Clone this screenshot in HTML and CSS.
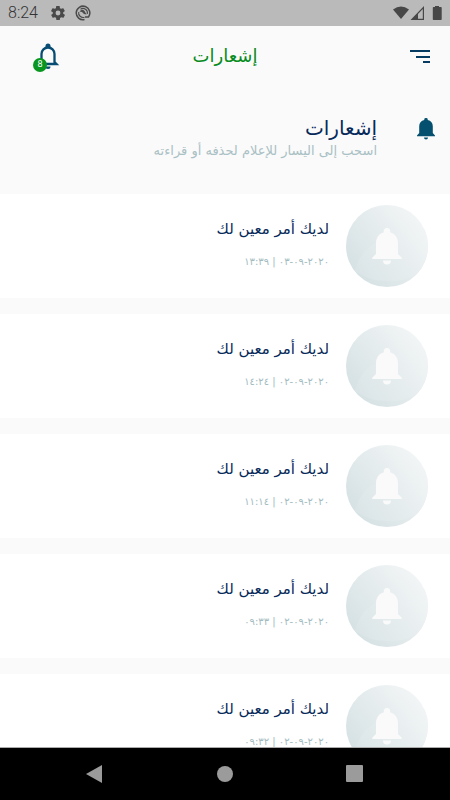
FILE: index.html
```html
<!DOCTYPE html>
<html lang="ar" dir="rtl">
<head>
<meta charset="utf-8">
<meta name="viewport" content="width=device-width, initial-scale=1">
<title>إشعارات</title>
<link rel="stylesheet" href="styles.css">
</head>
<body>
<svg width="0" height="0" class="defs" aria-hidden="true">
  <defs>
    <linearGradient id="disc" x1="0.1" y1="0.85" x2="0.9" y2="0.2">
      <stop offset="0" stop-color="#d5e1e3"/>
      <stop offset="1" stop-color="#f2f5f6"/>
    </linearGradient>
    <linearGradient id="shine" x1="0" y1="0.7" x2="1" y2="0.2">
      <stop offset="0" stop-color="#dbe5e7"/>
      <stop offset="1" stop-color="#f0f4f5"/>
    </linearGradient>
    <clipPath id="round"><circle cx="41" cy="41" r="41"/></clipPath>
    <symbol id="avatar" viewBox="0 0 82 82">
      <circle cx="41" cy="41" r="41" fill="url(#disc)"/>
      <path clip-path="url(#round)" fill="url(#shine)" d="M9 66Q14 44 34 36Q58 24 82 24V62Q60 78 42 76Q22 76 9 66z"/>
      <path fill="#fafafa" d="M41 23a3.200 3.200 0 0 1 3.100 4.200C49 28.600 52 32.600 52 38v11l3.800 3.800q.5 1.200-.8 1.200H27q-1.300 0-.8-1.200L30 49V38c0-5.400 3-9.400 7.900-10.800A3.200 3.200 0 0 1 41 23zM37 55.500h8a4 4 0 0 1-8 0z"/>
    </symbol>
  </defs>
</svg>
<div class="status" dir="ltr">
  <span class="clock">8:24</span>
  <svg class="gear" width="14" height="14" viewBox="2 2 20 20"><path fill="#4a4a4a" d="M19.400 13a7.500 7.500 0 0 0 0-2l2.100-1.600c.2-.2.200-.4.100-.6l-2-3.500c-.1-.2-.4-.3-.6-.2l-2.500 1a7.300 7.300 0 0 0-1.700-1l-.4-2.600c0-.3-.2-.5-.5-.5h-4c-.2 0-.4.200-.5.400l-.4 2.700a7.300 7.300 0 0 0-1.700 1l-2.500-1c-.2-.1-.5 0-.6.200l-2 3.500c-.1.200-.1.500.1.600L4.600 11a7.500 7.500 0 0 0 0 2l-2.100 1.600c-.2.200-.2.400-.1.600l2 3.500c.1.200.4.300.6.200l2.500-1c.5.400 1.100.7 1.700 1l.4 2.600c.1.300.3.500.5.500h4c.3 0 .5-.2.500-.5l.4-2.600a7.300 7.300 0 0 0 1.700-1l2.500 1c.2.100.5 0 .6-.2l2-3.500c.1-.2.100-.5-.1-.6zM12 15.500a3.500 3.500 0 1 1 0-7 3.500 3.500 0 0 1 0 7z"/></svg>
  <svg class="sync" width="16" height="16" viewBox="0 0 16 16"><g fill="none" stroke="#4a4a4a"><path stroke-width="1.500" d="M9.500 14.600A6.800 6.800 0 1 1 13.500 12H10"/><path stroke-width="1.100" d="M9.500 12.200A4.500 4.500 0 0 1 3.700 7M5.500 4.200A4.500 4.500 0 0 1 12.300 9"/></g><path fill="#4a4a4a" d="M4.500 6.500Q7 3.500 9.500 6L11.500 9.500 9 9 7 7z"/></svg>
  <svg class="signals" width="50" height="16" viewBox="0 0 50 16"><path fill="#474747" d="M1 4.500Q9 -1.500 17 4.500L9 14z"/><path fill="#474747" fill-rule="evenodd" d="M32 1v14H18.500zM30.800 4v9.800H26V9z"/><path fill="#474747" d="M41 2h2V1h4v1h2q.7 0 .7.700v11.500q0 .8-.7.800h-7.500q-.7 0-.7-.8V2.700q0-.7.700-.7z"/></svg>
</div>
<header class="bar">
  <button class="icon-btn" type="button" aria-label="القائمة">
    <svg width="20" height="15" viewBox="0 0 20 15"><path fill="#063b62" d="M0 1h20v2H0zM6 7h14v2H6zM13 12h7v2h-7z"/></svg>
  </button>
  <h1>إشعارات</h1>
  <button class="icon-btn alerts" type="button" aria-label="إشعارات">
    <svg width="24" height="26" viewBox="0 0 24 26"><path fill="none" stroke="#074c72" stroke-width="2.300" d="M5.500 20V11a6.500 6.500 0 0 1 13 0V19l2 2H3l2.500-2"/><path fill="#074c72" d="M9.500 5V3a2.500 2.500 0 0 1 5 0v2zM9.500 23.500h5a2.500 2.500 0 0 1-5 0z"/></svg>
    <span class="badge">8</span>
  </button>
</header>
<main>
  <section class="intro">
    <svg width="18" height="22" viewBox="0 0 18 22"><path fill="#05506f" d="M9 0a1.700 1.700 0 0 1 1.700 2C14 2.800 15.800 5 15.800 8.300V15l2.200 2.500v.8H0v-.8L2.200 15V8.300C2.200 5 4 2.800 7.300 2A1.700 1.700 0 0 1 9 0zM7 19.500h4a2 2 0 0 1-4 0z"/></svg>
    <div class="intro-text">
      <h2>إشعارات</h2>
      <p>اسحب إلى اليسار للإعلام لحذفه أو قراءته</p>
    </div>
  </section>
  <ul class="list">
    <li class="card"><svg class="avatar"><use href="#avatar"/></svg><div class="body"><h3>لديك أمر معين لك</h3><p><bdo dir="ltr">١٣:٣٩ | ٠٣-٠٩-٢٠٢٠</bdo></p></div></li>
    <li class="card"><svg class="avatar"><use href="#avatar"/></svg><div class="body"><h3>لديك أمر معين لك</h3><p><bdo dir="ltr">١٤:٢٤ | ٠٢-٠٩-٢٠٢٠</bdo></p></div></li>
    <li class="card"><svg class="avatar"><use href="#avatar"/></svg><div class="body"><h3>لديك أمر معين لك</h3><p><bdo dir="ltr">١١:١٤ | ٠٢-٠٩-٢٠٢٠</bdo></p></div></li>
    <li class="card"><svg class="avatar"><use href="#avatar"/></svg><div class="body"><h3>لديك أمر معين لك</h3><p><bdo dir="ltr">٠٩:٣٣ | ٠٢-٠٩-٢٠٢٠</bdo></p></div></li>
    <li class="card"><svg class="avatar"><use href="#avatar"/></svg><div class="body"><h3>لديك أمر معين لك</h3><p><bdo dir="ltr">٠٩:٣٢ | ٠٢-٠٩-٢٠٢٠</bdo></p></div></li>
  </ul>
</main>
<nav class="system" dir="ltr">
  <button type="button" aria-label="رجوع"><svg width="18" height="18" viewBox="0 0 18 18"><path fill="#9b9b9b" d="M16 0v18L0 9z"/></svg></button>
  <button type="button" aria-label="الرئيسية"><svg width="18" height="18" viewBox="0 0 18 18"><circle cx="9" cy="9" r="8" fill="#9b9b9b"/></svg></button>
  <button type="button" aria-label="التطبيقات"><svg width="18" height="18" viewBox="0 0 18 18"><rect x="0" y="0" width="17" height="17" rx="1" fill="#9b9b9b"/></svg></button>
</nav>
</body>
</html>
```
FILE: styles.css
```css
* { box-sizing: border-box; }
body {
  margin: 0;
  height: 100vh;
  display: flex;
  flex-direction: column;
  background: #fafafa;
  font-family: "DejaVu Sans", sans-serif;
}
h1, h2, h3, p, ul { margin: 0; padding: 0; font-weight: 400; }
svg { display: block; flex: none; }
button { border: 0; padding: 0; background: none; }
.defs { position: absolute; }
.status {
  flex: none;
  display: flex;
  align-items: center;
  height: 26px;
  padding: 0 8px;
  background: #bababa;
  color: #333;
}
.clock { font: 300 16px/28px Roboto, sans-serif; }
.gear { margin-left: 13px; }
.sync { margin-left: 10px; }
.signals { margin-left: auto; }
.bar {
  flex: none;
  display: grid;
  grid-template-columns: 1fr auto 1fr;
  align-items: center;
  height: 60px;
  padding: 0 20px;
}
.icon-btn { position: relative; display: block; justify-self: start; }
.alerts { justify-self: end; margin-left: 16px; }
.bar h1 { font-size: 18px; line-height: 24px; color: #078b20; }
.badge {
  position: absolute;
  left: -3px;
  bottom: -3px;
  width: 14px;
  height: 14px;
  border-radius: 50%;
  background: #089620;
  color: #fff;
  font: 9px/12px Roboto, sans-serif;
}
main { flex: 1; min-height: 0; overflow: hidden; }
.intro {
  display: flex;
  gap: 40px;
  align-items: flex-start;
  height: 108px;
  padding: 32px 15px 0;
}
.intro h2 { font-size: 20px; line-height: 20px; color: #06295a; }
.intro p { margin-top: 3px; font-size: 13px; line-height: 20px; color: #a9c0c4; }
.list { list-style: none; display: grid; gap: 16px; }
.card {
  display: flex;
  gap: 17px;
  height: 104px;
  padding: 11px 22px;
  background: #fff;
}
.avatar { width: 82px; height: 82px; }
.body { padding-top: 12px; }
.card h3 { font-size: 15px; line-height: 24px; color: #06295a; }
.card p { margin-top: 9px; font-size: 10px; line-height: 24px; color: #a3bcc1; }
.system {
  flex: none;
  display: flex;
  justify-content: space-between;
  align-items: center;
  height: 53px;
  padding: 0 86px;
  border-top: 1px solid #aaa;
  background: #000;
}
```
